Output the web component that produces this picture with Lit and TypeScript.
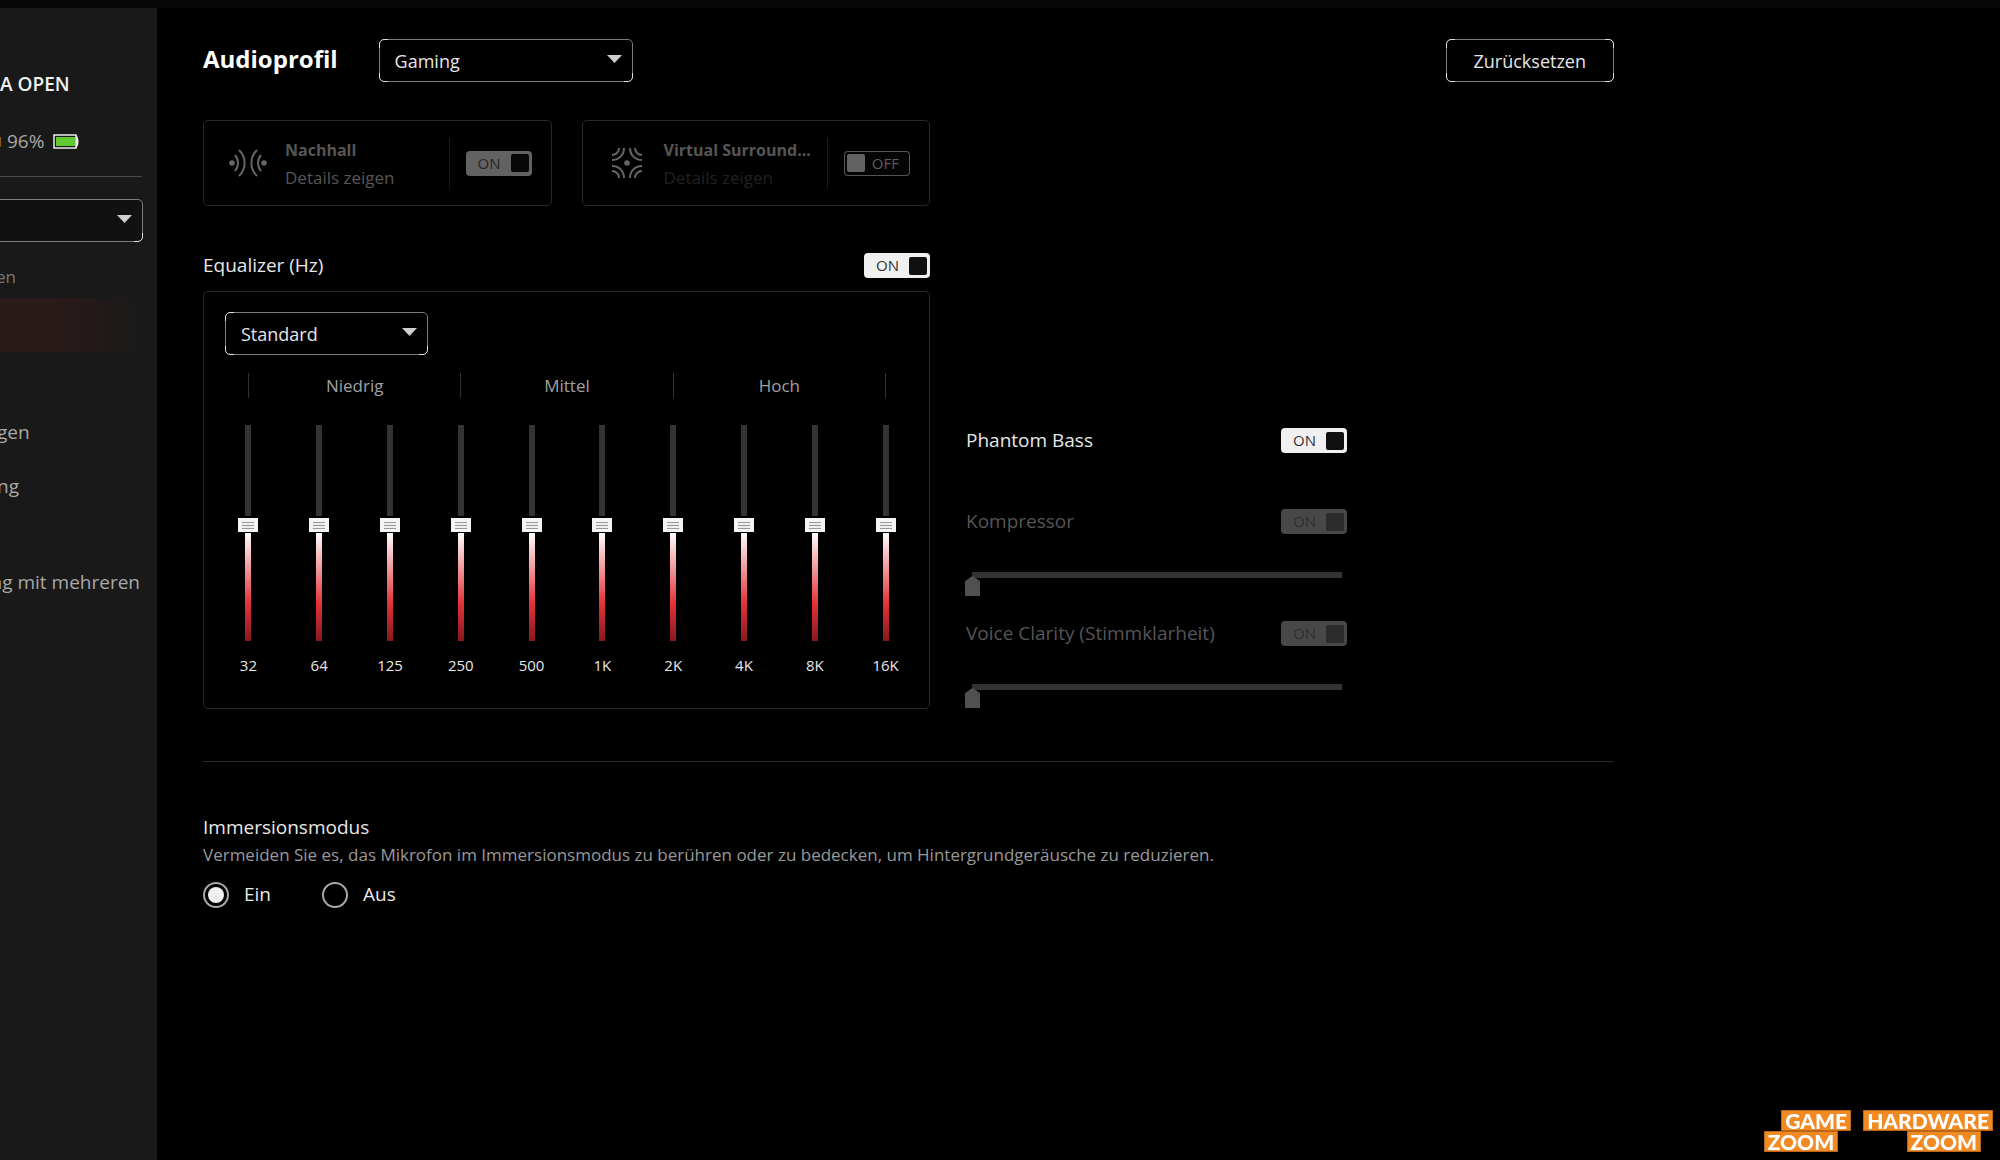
import { LitElement, html, css, svg } from "lit";
import { customElement, property, state } from "lit/decorators.js";
import { classMap } from "lit/directives/class-map.js";
import { styleMap } from "lit/directives/style-map.js";

/** Rectangular ON/OFF switch. */
@customElement("toggle-switch")
class ToggleSwitch extends LitElement {
  @property() label = "";
  @property() tone = "bright";
  @property({ type: Boolean }) on = false;
  @property({ type: Boolean }) disabled = false;

  static styles = css`
    :host {
      display: block;
      flex: none;
    }
    .toggle {
      position: relative;
      display: flex;
      align-items: center;
      justify-content: space-between;
      box-sizing: border-box;
      width: 66px;
      height: 25px;
      padding: 0 3px 0 12px;
      border-radius: 4px;
      background: #f0f0f0;
      color: #333;
      font-size: 15px;
      line-height: 25px;
    }
    .knob {
      width: 18px;
      height: 18px;
      border-radius: 2px;
      background: #101010;
    }
    .input {
      position: absolute;
      inset: 0;
      width: 100%;
      height: 100%;
      margin: 0;
      opacity: 0;
    }
    .dim {
      background: #626262;
      color: #262626;
    }
    .dim .knob {
      background: #080808;
    }
    .disabled {
      background: #484848;
      color: #303030;
    }
    .disabled .knob {
      background: #2c2c2c;
    }
    .off {
      flex-direction: row-reverse;
      padding: 0 11px 0 3px;
      background: #050505;
      box-shadow: inset 0 0 0 1px #555;
      color: #5c5c5c;
    }
    .off .knob {
      background: #636363;
    }
  `;

  private flip(event: Event) {
    this.on = (event.target as HTMLInputElement).checked;
  }

  render() {
    const classes = {
      toggle: true,
      off: !this.on,
      dim: this.on && this.tone === "dim",
      disabled: this.on && this.disabled,
    };
    return html`<label class=${classMap(classes)}>
      <input
        class="input"
        type="checkbox"
        role="switch"
        aria-label=${this.label}
        .checked=${this.on}
        ?disabled=${this.disabled}
        @change=${this.flip}
      />
      <span>${this.on ? "ON" : "OFF"}</span>
      <span class="knob"></span>
    </label>`;
  }
}

/** Drop-down with a thin frame and highlighted corners. */
@customElement("framed-select")
class FramedSelect extends LitElement {
  @property() label = "";
  @property({ attribute: false }) options: string[] = [];

  static styles = css`
    :host {
      display: block;
    }
    .frame {
      position: relative;
      display: flex;
      align-items: center;
    }
    .frame::after {
      content: "";
      position: absolute;
      inset: 0;
      border: 1px solid #e0e0e0;
      border-radius: 5px;
      pointer-events: none;
      mask:
        linear-gradient(#000 0 0) 0 0 / 9px 9px no-repeat,
        linear-gradient(#000 0 0) 0 100% / 9px 9px no-repeat,
        linear-gradient(#000 0 0) 100% 100% / 9px 9px no-repeat;
    }
    .select {
      appearance: none;
      box-sizing: border-box;
      width: 100%;
      height: 43px;
      padding: 1px 44px 0 15px;
      border: 1px solid #7c7c7c;
      border-radius: 5px;
      background: var(--select-background, #000);
      color: #e6e6e6;
      font: inherit;
      font-size: 18px;
    }
    .arrow {
      position: absolute;
      top: 16px;
      right: 11px;
      pointer-events: none;
    }
  `;

  render() {
    return html`<div class="frame">
      <select class="select" aria-label=${this.label}>
        ${this.options.map((name) => html`<option>${name}</option>`)}
      </select>
      <svg class="arrow" width="15" height="8" viewBox="0 0 15 8" aria-hidden="true">
        <path d="M0 0h15L7.500 8z" fill="#cfcfcf" />
      </svg>
    </div>`;
  }
}

interface Band {
  name: string;
  value: number;
}

const reverbIcon = svg`<svg width="38" height="28" viewBox="0 0 38 28" fill="none" stroke="#666" stroke-width="2">
  <circle cx="3" cy="14" r="2.800" fill="#666" stroke="none" />
  <circle cx="35" cy="14" r="2.800" fill="#666" stroke="none" />
  <path d="M6 6c4 4.500 4 11.500 0 16M10 1c7.500 7.500 7.500 18.500 0 26M32 6c-4 4.500-4 11.500 0 16M28 1c-7.500 7.500-7.500 18.500 0 26" />
</svg>`;

const surroundIcon = svg`<svg width="32" height="32" viewBox="0 0 32 32" fill="none" stroke="#666" stroke-width="2">
  <circle cx="16" cy="16" r="2.800" fill="#666" stroke="none" />
  <path d="M8 1C8 5 5 8 1 8M13 1C13 8 8 13 1 13M24 1c0 4 3 7 7 7M19 1c0 7 5 12 12 12M8 31c0-4-3-7-7-7M13 31c0-7-5-12-12-12M24 31c0-4 3-7 7-7M19 31c0-7 5-12 12-12" />
</svg>`;

@customElement("app-root")
class AppRoot extends LitElement {
  @state() private bands: Band[] = ["32", "64", "125", "250", "500", "1K", "2K", "4K", "8K", "16K"].map(
    (name) => ({ name, value: 54 }),
  );
  @state() private immersion = "Ein";

  static styles = css`
    :host {
      display: flex;
      flex-direction: column;
      min-height: 100vh;
      background: #000;
      color: #e8e8e8;
      font-family: "Open Sans", "Noto Sans", sans-serif;
      font-size: 19px;
      line-height: 27px;
    }
    h1,
    h2,
    h3,
    p {
      margin: 0;
      padding: 0;
      font-weight: 400;
      font-size: inherit;
    }
    .topbar {
      height: 8px;
      background: #080808;
    }
    .body {
      display: flex;
      flex: 1;
    }

    /* Sidebar */
    .sidebar {
      flex: none;
      box-sizing: border-box;
      width: 157px;
      padding: 63px 0 0;
      overflow: hidden;
      background: #191919;
      color: #a8a8a8;
      --select-background: #111;
    }
    .device {
      color: #f0f0f0;
      font-weight: 600;
    }
    .status {
      display: flex;
      align-items: center;
      gap: 6px;
      margin-top: 30px;
    }
    .status .battery {
      margin-left: 3px;
    }
    .rule {
      margin: 21px 15px 22px 0;
      border: 0;
      border-top: 1px solid #4a4a4a;
    }
    .device-select {
      margin: 0 14px 0 -64px;
    }
    .section {
      margin: 22px 0 0 -4px;
      color: #777;
      font-size: 17px;
      line-height: 26px;
    }
    .nav {
      display: flex;
      flex-direction: column;
      padding-top: 8px;
    }
    .nav a {
      display: flex;
      align-items: center;
      box-sizing: border-box;
      height: 54px;
      margin-left: -3px;
      padding-bottom: 2px;
      color: inherit;
      text-decoration: none;
      white-space: nowrap;
    }
    .nav .active {
      margin-right: 15px;
      background: linear-gradient(90deg, #2a1a1a 0 40%, #191919);
    }
    .nav .last {
      justify-content: flex-end;
      margin-top: 42px;
      padding-right: 17px;
    }

    /* Main column */
    .main {
      flex: 1;
      min-width: 0;
      max-width: 1411px;
      padding: 31px 46px 80px;
    }
    .header {
      display: flex;
      align-items: center;
      gap: 41px;
    }
    .title {
      padding-bottom: 4px;
      color: #fff;
      font-weight: 700;
      font-size: 24px;
    }
    .profile {
      width: 254px;
    }
    .reset {
      position: relative;
      height: 43px;
      margin-left: auto;
      padding: 1px 27px 0;
      border: 1px solid #7c7c7c;
      border-radius: 5px;
      background: none;
      color: #e6e6e6;
      font: inherit;
      font-size: 18px;
    }
    .reset::after {
      content: "";
      position: absolute;
      inset: -1px;
      border: 1px solid #e0e0e0;
      border-radius: 5px;
      mask:
        linear-gradient(#000 0 0) 0 0 / 9px 9px no-repeat,
        linear-gradient(#000 0 0) 100% 0 / 9px 9px no-repeat,
        linear-gradient(#000 0 0) 0 100% / 9px 9px no-repeat,
        linear-gradient(#000 0 0) 100% 100% / 9px 9px no-repeat;
    }

    .effects {
      display: grid;
      grid-template-columns: 1fr 1fr;
      gap: 30px;
      max-width: 727px;
      margin-top: 38px;
    }
    .card {
      display: flex;
      align-items: center;
      box-sizing: border-box;
      height: 86px;
      padding: 0 19px 0 15px;
      border: 1px solid #282828;
      border-radius: 5px;
      color: #565656;
    }
    .card-icon {
      display: flex;
      flex: none;
      justify-content: center;
      width: 58px;
      margin-right: 8px;
    }
    .card-text {
      flex: 1;
      min-width: 0;
      padding-top: 2px;
      font-size: 17px;
      white-space: nowrap;
    }
    .card-title {
      font-weight: 700;
      font-size: 16px;
    }
    .faint {
      color: #202020;
    }
    .card-divider {
      width: 1px;
      height: 51px;
      margin: 0 16px 0 12px;
      background: #1a1a1a;
    }

    .sound {
      display: flex;
      align-items: flex-end;
      gap: 36px;
      margin-top: 47px;
    }
    .equalizer {
      flex: 0 1 727px;
    }
    .row {
      display: flex;
      align-items: center;
      justify-content: space-between;
      height: 25px;
    }
    .panel {
      margin-top: 13px;
      padding: 20px 8px 32px 9px;
      border: 1px solid #282828;
      border-radius: 5px;
    }
    .preset {
      width: 203px;
      margin-left: 12px;
    }
    .groups {
      display: grid;
      grid-template-columns: repeat(3, 1fr);
      margin: 18px 35px 0;
      border-left: 1px solid #333;
      color: #a0a0a0;
      font-size: 17px;
      line-height: 25px;
      text-align: center;
    }
    .group {
      border-right: 1px solid #333;
    }
    .bands {
      display: grid;
      grid-template-columns: repeat(10, 1fr);
      margin-top: 27px;
    }
    .band {
      display: flex;
      flex-direction: column;
      align-items: center;
      gap: 13px;
      font-size: 15px;
      line-height: 22px;
    }
    .fader {
      appearance: none;
      writing-mode: vertical-lr;
      direction: rtl;
      width: 20px;
      height: 216px;
      margin: 0;
      background: none;
    }
    .fader::-webkit-slider-runnable-track {
      width: 20px;
      height: 216px;
      background:
        linear-gradient(#fff, #e23338 65%, #86191d) 50% 100% / 6px var(--fill) no-repeat,
        linear-gradient(#333 0 0) 50% 0 / 6px var(--rest) no-repeat;
    }
    .fader::-webkit-slider-thumb {
      appearance: none;
      box-sizing: border-box;
      width: 20px;
      height: 14px;
      background:
        repeating-linear-gradient(#999 0 1px, #eee 1px 3px) 50% 4px / 12px 7px no-repeat,
        #f4f4f4;
    }

    .extras {
      flex: 0 1 381px;
      display: flex;
      flex-direction: column;
    }
    .muted {
      color: #555;
    }
    .row.second {
      margin-top: 56px;
    }
    .row.third {
      margin-top: 24px;
    }
    .level {
      appearance: none;
      height: 26px;
      margin: 37px -1px 0;
      background: none;
    }
    .level::-webkit-slider-runnable-track {
      height: 26px;
      background: linear-gradient(#333 0 0) 7px 1px / calc(100% - 13px) 6px no-repeat;
    }
    .level::-webkit-slider-thumb {
      appearance: none;
      width: 15px;
      height: 20px;
      margin-top: 5px;
      background: #505050;
      clip-path: polygon(50% 0, 100% 25%, 100% 100%, 0 100%, 0 25%);
    }

    .separator {
      height: 1px;
      margin: 52px 0;
      border: 0;
      background: #2a2a2a;
    }
    .hint {
      margin-bottom: 14px;
      color: #999;
      font-size: 17px;
    }
    .choices {
      display: flex;
      gap: 51px;
    }
    .choice {
      display: flex;
      align-items: center;
      gap: 15px;
      height: 25px;
    }
    .radio {
      appearance: none;
      box-sizing: border-box;
      width: 26px;
      height: 26px;
      margin: 0;
      padding: 3px;
      border: 2px solid #a8a8a8;
      border-radius: 50%;
    }
    .radio:checked {
      background: #f0f0f0 content-box;
    }

    /* Site marks in the lower right corner */
    .marks {
      position: fixed;
      right: 7px;
      bottom: 8px;
      display: flex;
      gap: 12px;
      color: #fff;
      font-family: Lato, sans-serif;
      font-weight: 900;
      font-size: 21px;
      line-height: 21px;
    }
    .mark {
      display: flex;
      flex-direction: column;
    }
    .mark span {
      padding: 0 4px;
      background: #f28a24;
      box-shadow: inset 0 0 0 1px #b8661a;
    }
    .upper {
      align-self: flex-end;
    }
    .game .lower {
      align-self: flex-start;
      margin-right: 13px;
    }
    .hardware .lower {
      align-self: flex-end;
      margin-right: 12px;
    }
  `;

  private setBand(index: number, event: Event) {
    const value = Number((event.target as HTMLInputElement).value);
    this.bands = this.bands.map((band, i) => (i === index ? { ...band, value } : band));
  }

  private renderBand(band: Band, index: number) {
    // Thumb travel is 202px; the filled part starts just below the thumb.
    const below = Math.round((band.value / 100) * 202);
    const vars = { "--fill": `${below - 1}px`, "--rest": `${200 - below}px` };
    return html`<label class="band">
      <input
        class="fader"
        type="range"
        min="0"
        max="100"
        .value=${String(band.value)}
        style=${styleMap(vars)}
        @input=${(event: Event) => this.setBand(index, event)}
      />
      <span>${band.name}</span>
    </label>`;
  }

  private renderCard(icon: unknown, title: string, on: boolean) {
    return html`<section class="card">
      <div class="card-icon">${icon}</div>
      <div class="card-text">
        <h2 class="card-title">${title}</h2>
        <p class=${on ? "" : "faint"}>Details zeigen</p>
      </div>
      <div class="card-divider"></div>
      <toggle-switch label=${title} tone="dim" ?on=${on}></toggle-switch>
    </section>`;
  }

  private renderSidebar() {
    return html`<aside class="sidebar">
      <div class="device">A OPEN</div>
      <div class="status">
        <svg width="1" height="14" viewBox="0 0 1 14" aria-hidden="true">
          <path d="M0 2v10" stroke="#8a5a20" stroke-width="2" />
        </svg>
        <span>96%</span>
        <svg class="battery" width="26" height="15" viewBox="0 0 26 15" aria-hidden="true">
          <path d="M1 1h22v13H1z" fill="none" stroke="#eee" stroke-width="1.500" />
          <path d="M3 3h19v9H3z" fill="#62c832" />
          <path d="M23 1q2.500 2 2.500 6.500T23 14z" fill="#eee" />
        </svg>
      </div>
      <hr class="rule" />
      <framed-select class="device-select" label="Gerät"></framed-select>
      <div class="section">en</div>
      <nav class="nav">
        <a class="active" href="#ton" aria-label="Ton" aria-current="page"></a>
        <a href="#mikrofon" aria-label="Mikrofon"></a>
        <a href="#gen">gen</a>
        <a href="#ng">ng</a>
        <a class="last" href="#mehrere">ng mit mehreren</a>
      </nav>
    </aside>`;
  }

  render() {
    return html`
      <div class="topbar"></div>
      <div class="body">
        ${this.renderSidebar()}
        <main class="main">
          <header class="header">
            <h1 class="title">Audioprofil</h1>
            <framed-select class="profile" label="Audioprofil" .options=${["Gaming"]}></framed-select>
            <button class="reset" type="button">Zurücksetzen</button>
          </header>

          <div class="effects">
            ${this.renderCard(reverbIcon, "Nachhall", true)}
            ${this.renderCard(surroundIcon, "Virtual Surround...", false)}
          </div>

          <div class="sound">
            <section class="equalizer">
              <div class="row">
                <h2>Equalizer (Hz)</h2>
                <toggle-switch label="Equalizer (Hz)" on></toggle-switch>
              </div>
              <div class="panel">
                <framed-select class="preset" label="Equalizer" .options=${["Standard"]}></framed-select>
                <div class="groups">
                  ${["Niedrig", "Mittel", "Hoch"].map((name) => html`<div class="group">${name}</div>`)}
                </div>
                <div class="bands">${this.bands.map((band, i) => this.renderBand(band, i))}</div>
              </div>
            </section>

            <section class="extras">
              <div class="row">
                <h3>Phantom Bass</h3>
                <toggle-switch label="Phantom Bass" on></toggle-switch>
              </div>
              ${[
                { name: "Kompressor", place: "second" },
                { name: "Voice Clarity (Stimmklarheit)", place: "third" },
              ].map(
                ({ name, place }) => html`
                  <div class="row muted ${place}">
                    <h3>${name}</h3>
                    <toggle-switch label=${name} on disabled></toggle-switch>
                  </div>
                  <input class="level" type="range" min="0" max="100" value="0" aria-label=${name} disabled />
                `,
              )}
            </section>
          </div>

          <hr class="separator" />

          <section>
            <h2 id="immersion">Immersionsmodus</h2>
            <p class="hint">
              Vermeiden Sie es, das Mikrofon im Immersionsmodus zu berühren oder zu bedecken, um Hintergrundgeräusche zu
              reduzieren.
            </p>
            <div class="choices" role="radiogroup" aria-labelledby="immersion">
              ${["Ein", "Aus"].map(
                (name) => html`<label class="choice">
                  <input
                    class="radio"
                    type="radio"
                    name="immersion"
                    .checked=${this.immersion === name}
                    @change=${() => (this.immersion = name)}
                  />
                  ${name}
                </label>`,
              )}
            </div>
          </section>
        </main>
      </div>
      <div class="marks">
        <div class="mark game"><span class="upper">GAME</span><span class="lower">ZOOM</span></div>
        <div class="mark hardware"><span class="upper">HARDWARE</span><span class="lower">ZOOM</span></div>
      </div>
    `;
  }
}
